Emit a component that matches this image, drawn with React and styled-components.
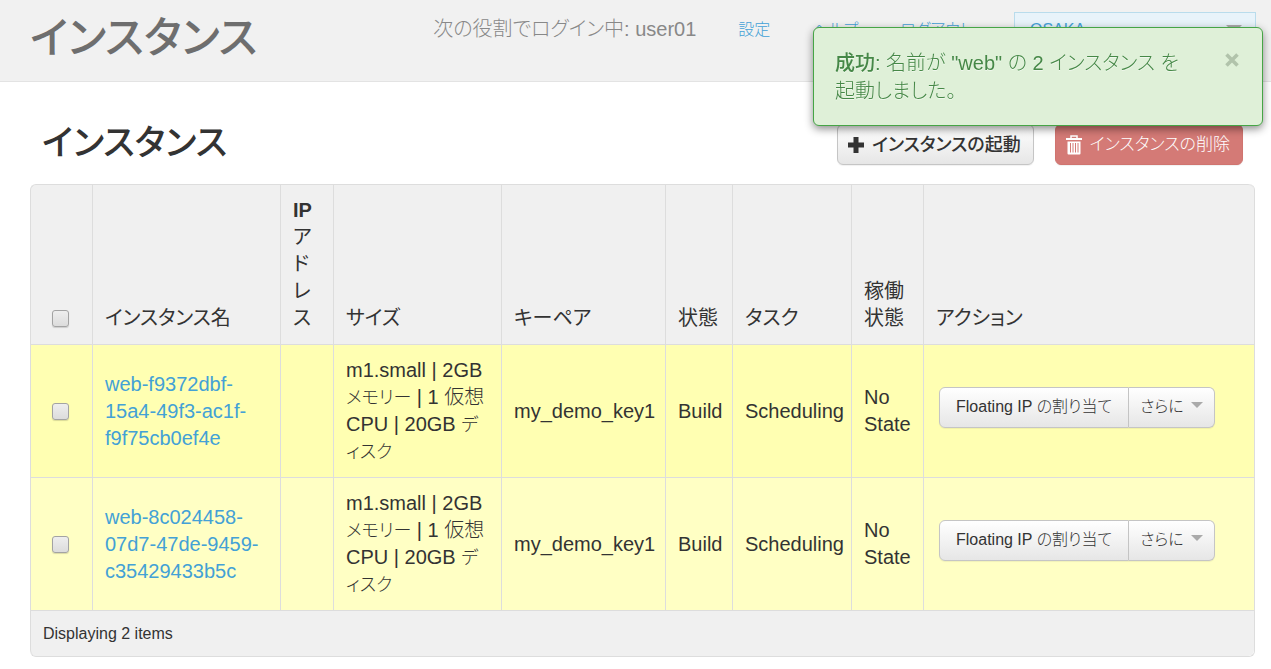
import React from "react";
import styled, { createGlobalStyle, css } from "styled-components";

const GlobalStyle = createGlobalStyle`
  *, *::before, *::after { box-sizing: border-box; }
  body {
    margin: 0;
    background: #fff;
    color: #333;
    font: 300 20px/27px "Liberation Sans", "Noto Sans CJK JP", sans-serif;
    font-feature-settings: "palt";
  }
  a { color: #43a1d6; text-decoration: none; }
  button, select, input { font: inherit; font-feature-settings: inherit; }
`;

const Header = styled.header`
  display: flex;
  align-items: flex-start;
  justify-content: space-between;
  min-height: 82px;
  padding: 12px 15px 0 30px;
  background: #f1f1f1;
  border-bottom: 1px solid #e3e3e3;
`;

const PageTitle = styled.h1`
  margin: 0;
  font-size: 43px;
  line-height: 52px;
  font-weight: 500;
  color: #6e6e6e;
`;

const UserNav = styled.nav`
  display: flex;
  align-items: center;
  gap: 42px;
  height: 34px;
  font-size: 16px;
  white-space: nowrap;
`;

const UserLabel = styled.span`
  font-size: 20px;
  color: #888;
`;

const Caret = styled.span`
  width: 0;
  height: 0;
  margin: 0 0 4px;
  border: solid transparent;
  border-width: 6px 6px 0;
  border-top-color: #aaa;
`;

const RegionPicker = styled.div`
  display: grid;
  grid-template-columns: 1fr;
  align-items: center;
  width: 242px;

  > * { grid-area: 1 / 1; }
  ${Caret} { justify-self: end; margin: 0 14px 0 0; pointer-events: none; border-width: 8px 8px 0; }
`;

const RegionSelect = styled.select`
  width: 100%;
  height: 34px;
  padding: 0 15px;
  appearance: none;
  border: 1px solid #b9dcec;
  border-radius: 0;
  background: #e8f3fa;
  color: #43a1d6;
`;

const Alert = styled.div`
  position: fixed;
  top: 27px;
  right: 8px;
  z-index: 10;
  display: flex;
  align-items: flex-start;
  justify-content: space-between;
  width: 450px;
  padding: 21px 20px 20px 21px;
  border: 1px solid #46a546;
  border-radius: 6px;
  background: #dff0d8;
  color: #468847;
  line-height: 28px;
  text-shadow: 0 1px 0 rgba(255, 255, 255, 0.5);
  box-shadow: 0 3px 8px rgba(0, 0, 0, 0.45);
`;

const AlertText = styled.p`
  margin: 0;
  width: 360px;
  strong { font-weight: 500; }
`;

const CloseButton = styled.button`
  display: grid;
  place-items: center;
  width: 20px;
  height: 22px;
  padding: 0;
  border: 0;
  background: none;
  color: #b1c3ab;
  cursor: pointer;
`;

const Main = styled.main`
  padding: 0 16px 12px 30px;
`;

const Toolbar = styled.div`
  display: flex;
  align-items: flex-end;
  justify-content: space-between;
  padding: 42px 12px 19px;
`;

const SectionTitle = styled.h2`
  margin: 0;
  padding-bottom: 4px;
  font-size: 35px;
  line-height: 36px;
  font-weight: 500;
`;

const ButtonRow = styled.div`
  display: flex;
  gap: 21px;
`;

const Button = styled.button`
  display: inline-flex;
  align-items: center;
  gap: 7px;
  height: 41px;
  padding: 0 ${(p) => p.$pad ?? 12}px 0 ${(p) => p.$pad ?? 9}px;
  border: 1px solid #c5c5c5;
  border-radius: 6px;
  background: linear-gradient(#fff, #e6e6e6);
  color: #333;
  font-size: 16px;
  line-height: 20px;
  white-space: nowrap;
  cursor: pointer;
  box-shadow: 0 1px 1px rgba(0, 0, 0, 0.06);

  ${(p) => p.$strong && css`
    font-size: 18px;
    font-weight: 500;
  `}
  ${(p) => p.$danger && css`
    border-color: #d0746f;
    background: #d47a76;
    color: #fff;
    font-size: 17px;
  `}
`;

const ButtonGroup = styled.div`
  display: flex;
  padding: 0 0 8px 3px;

  ${Button}:first-child { border-radius: 6px 0 0 6px; }
  ${Button}:last-child { border-radius: 0 6px 6px 0; border-left: 0; }
`;

const Table = styled.table`
  width: 100%;
  table-layout: fixed;
  border-spacing: 0;
  border: 1px solid #ddd;
  border-top: 0;
  border-left: 0;
  border-radius: 6px;
`;

const Col = styled.col`
  width: ${(p) => (p.$w ? `${p.$w}px` : "auto")};
`;

const cell = css`
  padding: 12px;
  border-top: 1px solid #ddd;
  border-left: 1px solid #ddd;
  text-align: left;
`;

const HeadCell = styled.th`
  ${cell}
  background: #f0f0f0;
  font-weight: 400;
  vertical-align: bottom;
  &:first-child { border-top-left-radius: 6px; }
  &:last-child { border-top-right-radius: 6px; }
`;

const Latin = styled.span`
  font-weight: 700;
`;

const Kana = styled.span`
  font-size: 18px;
  line-height: 24px;
`;

const Row = styled.tr`
  background: ${(p) => (p.$alt ? "#ffffc4" : "#ffffb2")};
`;

const Cell = styled.td`
  ${cell}
  vertical-align: middle;
`;

const FootCell = styled.td`
  ${cell}
  background: #f0f0f0;
  border-radius: 0 0 6px 6px;
  font-size: 16px;
  line-height: 21px;
`;

const Checkbox = styled.input.attrs({ type: "checkbox" })`
  display: block;
  width: 17px;
  height: 17px;
  margin: 5px 9px;
  appearance: none;
  border: 1px solid #a3a3a3;
  border-radius: 3px;
  background: linear-gradient(#eee, #dcdcdc);
  box-shadow: 0 1px 1px rgba(0, 0, 0, 0.15);
  &:checked { background: #8ab; }
`;

const PlusIcon = () => (
  <svg width="18" height="18" viewBox="0 0 18 18" fill="#333" aria-hidden="true">
    <path d="M6.500 1h5v5.500H17v5h-5.500V17h-5v-5.500H1v-5h5.500z" />
  </svg>
);

const TrashIcon = () => (
  <svg width="18" height="20" viewBox="0 0 18 20" aria-hidden="true">
    <path d="M6 3V1h6v2" fill="none" stroke="#fff" strokeWidth="1.500" />
    <path d="M1 3h16v2H1z" fill="#fff" />
    <path d="M2.500 6.500h13v12q0 1-1 1h-11q-1 0-1-1z" fill="#fff" />
    <path d="M5.500 8v9.500M8 8v9.500M10.500 8v9.500M13 8v9.500" stroke="#d47a76" strokeWidth="1" />
  </svg>
);

const CloseIcon = () => (
  <svg width="16" height="16" viewBox="0 0 16 16" aria-hidden="true">
    <path d="M2.500 2.500l11 11M13.500 2.500l-11 11" stroke="currentColor" strokeWidth="3.600" />
  </svg>
);

const columnWidths = [62, 188, 53, 168, 164, 67, 119, 72, null];

const headings = ["サイズ", "キーペア", "状態", "タスク", "稼働状態", "アクション"];

const instances = ["web-f9372dbf-15a4-49f3-ac1f-f9f75cb0ef4e", "web-8c024458-07d7-47de-9459-c35429433b5c"];

function InstanceRow({ name, alt }) {
  return (
    <Row $alt={alt}>
      <Cell><Checkbox aria-label={name} /></Cell>
      <Cell><a href="#instance">{name}</a></Cell>
      <Cell />
      <Cell>
        m1.small | 2GB <Kana>メモリー</Kana> | 1 仮想 CPU | 20GB <Kana>ディスク</Kana>
      </Cell>
      <Cell>my_demo_key1</Cell>
      <Cell>Build</Cell>
      <Cell>Scheduling</Cell>
      <Cell>No State</Cell>
      <Cell>
        <ButtonGroup>
          <Button type="button" $pad={16}>Floating IP の割り当て</Button>
          <Button type="button" $pad={11}>さらに <Caret /></Button>
        </ButtonGroup>
      </Cell>
    </Row>
  );
}

export default function App() {
  return (
    <div lang="ja">
      <GlobalStyle />
      <Header>
        <PageTitle>インスタンス</PageTitle>
        <UserNav>
          <UserLabel>次の役割でログイン中: user01</UserLabel>
          <a href="#settings">設定</a>
          <a href="#help">ヘルプ</a>
          <a href="#logout">ログアウト</a>
          <RegionPicker>
            <RegionSelect aria-label="Region" defaultValue="OSAKA">
              <option>OSAKA</option>
            </RegionSelect>
            <Caret />
          </RegionPicker>
        </UserNav>
      </Header>
      <Alert role="status">
        <AlertText><strong>成功:</strong> 名前が "web" の 2 インスタンス を起動しました。</AlertText>
        <CloseButton type="button" aria-label="Close"><CloseIcon /></CloseButton>
      </Alert>
      <Main>
        <Toolbar>
          <SectionTitle>インスタンス</SectionTitle>
          <ButtonRow>
            <Button type="button" $strong><PlusIcon />インスタンスの起動</Button>
            <Button type="button" $danger><TrashIcon />インスタンスの削除</Button>
          </ButtonRow>
        </Toolbar>
        <Table>
          <colgroup>
            {columnWidths.map((w, i) => <Col key={i} $w={w} />)}
          </colgroup>
          <thead>
            <tr>
              <HeadCell><Checkbox aria-label="Select all" /></HeadCell>
              <HeadCell>インスタンス名</HeadCell>
              <HeadCell><Latin>IP</Latin> アドレス</HeadCell>
              {headings.map((h) => <HeadCell key={h}>{h}</HeadCell>)}
            </tr>
          </thead>
          <tbody>
            {instances.map((name, i) => <InstanceRow key={name} name={name} alt={i % 2 === 1} />)}
          </tbody>
          <tfoot>
            <tr><FootCell colSpan={9}>Displaying 2 items</FootCell></tr>
          </tfoot>
        </Table>
      </Main>
    </div>
  );
}
